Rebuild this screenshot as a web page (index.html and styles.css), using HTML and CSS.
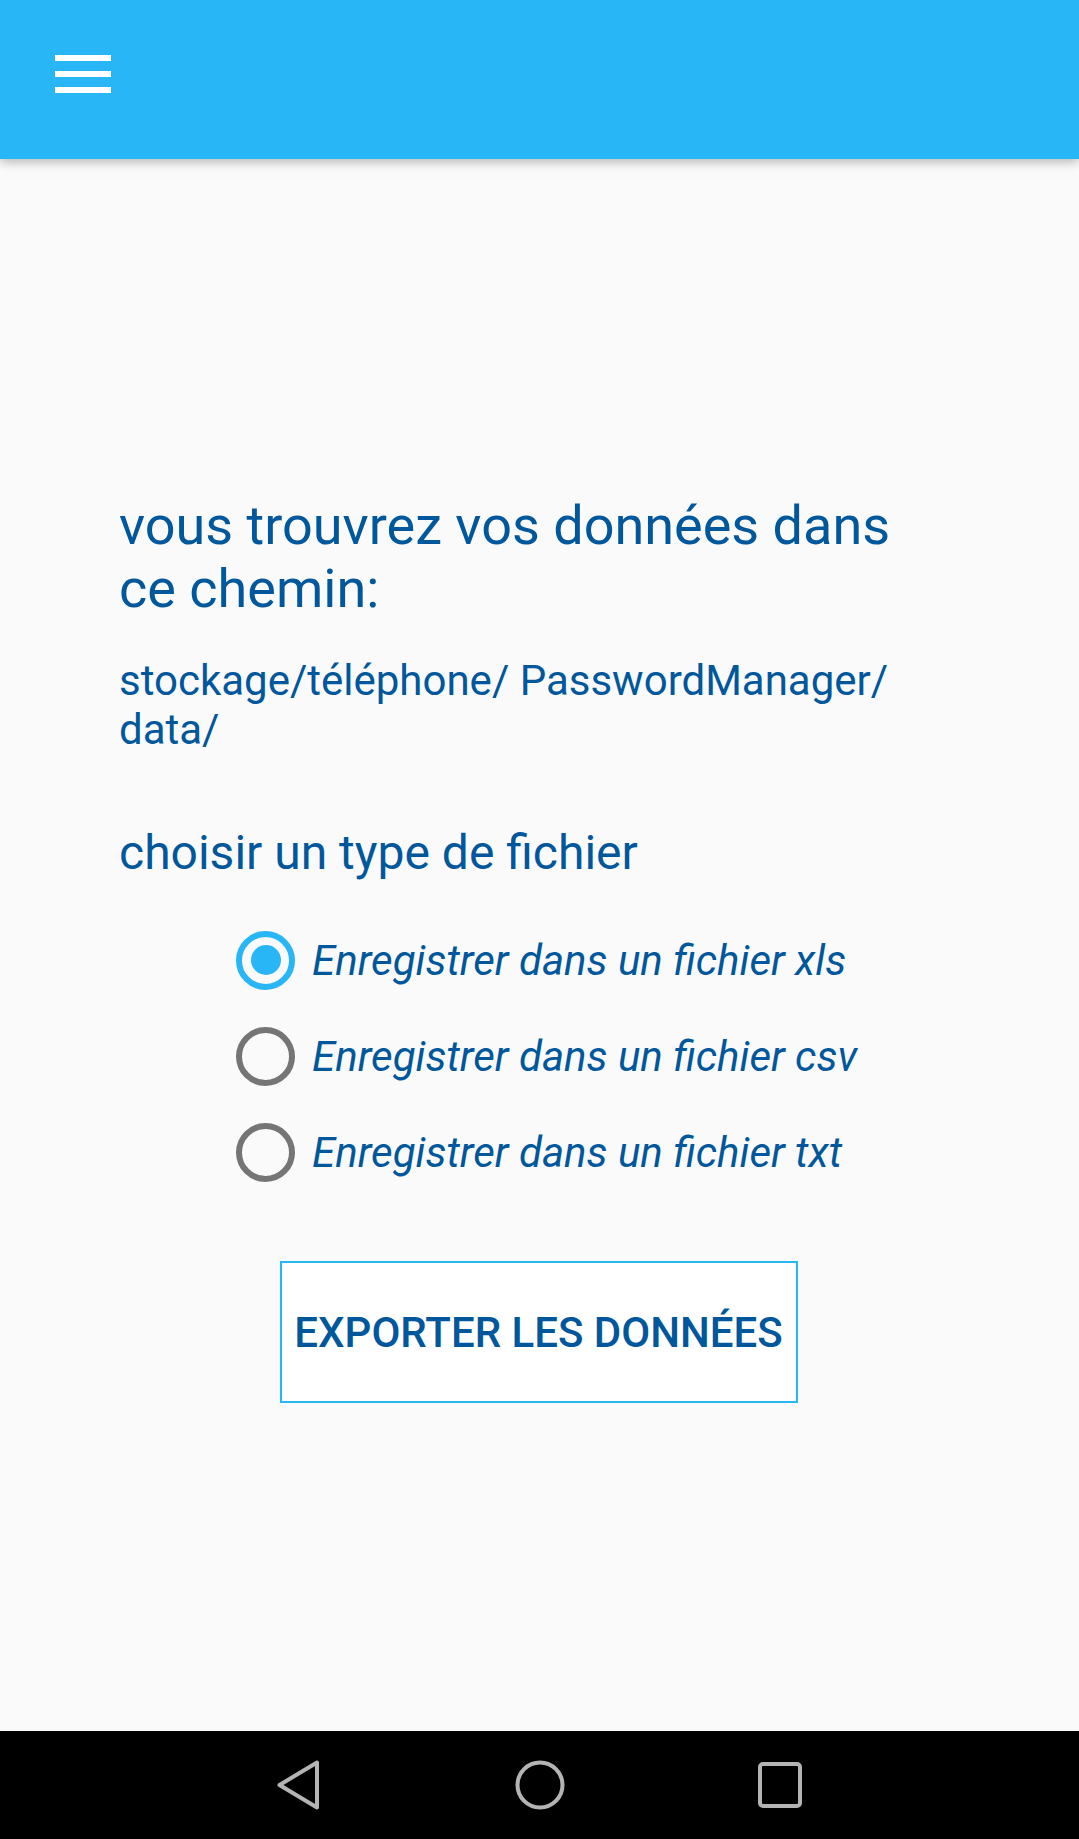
FILE: index.html
```html
<!DOCTYPE html>
<html lang="fr">
<head>
<meta charset="utf-8">
<title>Exporter les données</title>
<link rel="stylesheet" href="styles.css">
</head>
<body>
<div class="screen">
  <header class="appbar">
    <button class="menu" aria-label="menu">
      <span class="bar"></span><span class="bar"></span><span class="bar"></span>
    </button>
  </header>
  <main class="content">
    <div class="column">
      <h1 class="heading">vous trouvrez vos données dans ce chemin:</h1>
      <p class="path">stockage/téléphone/ PasswordManager/ data/</p>
      <h2 class="subheading">choisir un type de fichier</h2>
    </div>
    <div class="radios">
      <label class="radio-row"><span class="radio checked"><span class="dot"></span></span><span class="label">Enregistrer dans un fichier xls</span></label>
      <label class="radio-row"><span class="radio"></span><span class="label">Enregistrer dans un fichier csv</span></label>
      <label class="radio-row"><span class="radio"></span><span class="label">Enregistrer dans un fichier txt</span></label>
    </div>
    <div class="actions">
      <button class="export">EXPORTER LES DONNÉES</button>
    </div>
  </main>
  <nav class="navbar">
    <svg class="nav-icon" width="48" height="52" viewBox="0 0 48 52"><path d="M42 3.5 L42 48.5 L4.5 26 Z" fill="none" stroke="#b4b4b4" stroke-width="4" stroke-linejoin="round"/></svg>
    <svg class="nav-icon" width="52" height="52" viewBox="0 0 52 52"><circle cx="26" cy="26" r="22.5" fill="none" stroke="#b4b4b4" stroke-width="4"/></svg>
    <svg class="nav-icon" width="48" height="48" viewBox="0 0 48 48"><rect x="3" y="3" width="40" height="42" rx="3" fill="none" stroke="#b4b4b4" stroke-width="4"/></svg>
  </nav>
</div>
</body>
</html>
```
FILE: styles.css
```css
* { box-sizing: border-box; }
html, body { margin: 0; padding: 0; }
body {
  background: #fafafa;
  font-family: Roboto, "Liberation Sans", sans-serif;
  color: #01579b;
}
.screen {
  width: 1079px;
  height: 1839px;
  display: flex;
  flex-direction: column;
  overflow: hidden;
}
.appbar {
  height: 159px;
  flex: none;
  background: #29b6f6;
  box-shadow: 0 3px 10px rgba(0,0,0,0.28);
  position: relative;
  z-index: 2;
  display: flex;
  align-items: flex-start;
}
.menu {
  margin: 55px 0 0 55px;
  padding: 0;
  border: 0;
  background: none;
  display: flex;
  flex-direction: column;
  gap: 10px;
}
.menu .bar {
  display: block;
  width: 56px;
  height: 6px;
  background: #fff;
}
.content {
  flex: 1;
  padding-top: 335px;
}
.column {
  padding-left: 119px;
  width: 920px;
}
.heading {
  margin: 0;
  font-size: 54px;
  font-weight: 400;
  line-height: 63px;
}
.path {
  margin: 36px 0 0;
  font-size: 42px;
  line-height: 49px;
}
.subheading {
  margin: 71px 0 0;
  font-size: 48px;
  font-weight: 400;
  line-height: 56px;
}
.radios {
  margin-top: 31px;
  padding-left: 236px;
  display: flex;
  flex-direction: column;
}
.radio-row {
  height: 96px;
  display: flex;
  align-items: center;
  gap: 17px;
}
.radio {
  width: 59px;
  height: 59px;
  border-radius: 50%;
  border: 6px solid #757575;
  display: flex;
  align-items: center;
  justify-content: center;
  flex: none;
}
.radio.checked { border-color: #29b6f6; }
.radio .dot {
  width: 30px;
  height: 30px;
  border-radius: 50%;
  background: #29b6f6;
}
.label {
  font-size: 42px;
  font-style: italic;
  line-height: 49px;
}
.actions {
  margin-top: 61px;
  display: flex;
  justify-content: center;
}
.export {
  width: 518px;
  height: 142px;
  background: #fff;
  border: 2px solid #29b6f6;
  font-family: Roboto, "Liberation Sans", sans-serif;
  font-size: 42px;
  font-weight: 500;
  color: #01579b;
  padding: 0;
  margin-right: 2px;
}
.navbar {
  height: 108px;
  flex: none;
  background: #000;
  display: flex;
  align-items: center;
  justify-content: center;
  gap: 191px;
  padding-left: 0;
}
```
